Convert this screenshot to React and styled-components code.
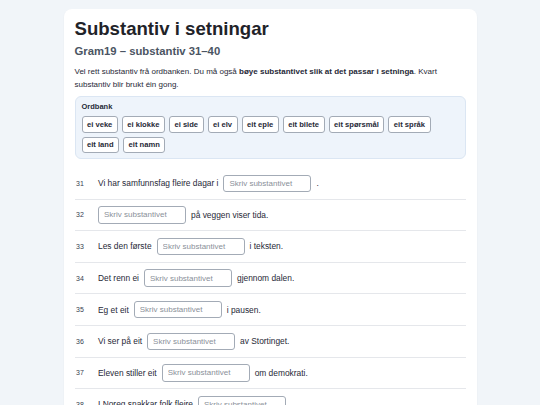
import React from 'react'
import styled, { createGlobalStyle } from 'styled-components'

const GlobalStyle = createGlobalStyle`
  html, body {
    margin: 0;
    padding: 0;
    background: #f1f5f9;
    font-family: "Liberation Sans", Arial, sans-serif;
    color: #1f2937;
  }
`

const words = [
  'ei veke', 'ei klokke', 'ei side', 'ei elv', 'eit eple', 'eit bilete',
  'eit spørsmål', 'eit språk', 'eit land', 'eit namn',
]

// before / after the blank
const sentences = [
  { n: 31, before: 'Vi har samfunnsfag fleire dagar i', after: '.' },
  { n: 32, before: '', after: 'på veggen viser tida.' },
  { n: 33, before: 'Les den første', after: 'i teksten.' },
  { n: 34, before: 'Det renn ei', after: 'gjennom dalen.' },
  { n: 35, before: 'Eg et eit', after: 'i pausen.' },
  { n: 36, before: 'Vi ser på eit', after: 'av Stortinget.' },
  { n: 37, before: 'Eleven stiller eit', after: 'om demokrati.' },
  { n: 38, before: 'I Noreg snakkar folk fleire', after: '.' },
  { n: 39, before: 'Sverige er eit', after: 'i Norden.' },
  { n: 40, before: 'Skriv', after: 'ditt øvst på arket.' },
]

const App = () => {
  return (
    <Page>
      <GlobalStyle />
      <Card>
        <Title>Substantiv i setningar</Title>
        <Subtitle>Gram19 – substantiv 31–40</Subtitle>
        <Intro>
          Vel rett substantiv frå ordbanken. Du må også{' '}
          <b>bøye substantivet slik at det passar i setninga</b>. Kvart
          substantiv blir brukt éin gong.
        </Intro>

        <WordBank>
          <BankLabel>Ordbank</BankLabel>
          <Chips>
            {words.map((w) => (
              <Chip key={w}>{w}</Chip>
            ))}
          </Chips>
        </WordBank>

        <List>
          {sentences.map((s) => (
            <Row key={s.n}>
              <Num>{s.n}</Num>
              {s.before && <span>{s.before}</span>}
              <Blank type="text" placeholder="Skriv substantivet" />
              {s.after && <span>{s.after}</span>}
            </Row>
          ))}
        </List>
      </Card>
    </Page>
  )
}

const Page = styled.div`
  padding: 9px 0 20px;
  display: flex;
  justify-content: center;
`

const Card = styled.div`
  width: 413px;
  box-sizing: border-box;
  background: #ffffff;
  border-radius: 8px;
  padding: 9px 11px 10px;
  box-shadow: 0 1px 2px rgba(15, 23, 42, 0.05);
`

const Title = styled.h1`
  margin: 0;
  font-size: 18.6px;
  line-height: 22px;
  font-weight: 700;
  color: #1f2329;
`

const Subtitle = styled.h2`
  margin: 4px 0 0;
  font-size: 11.3px;
  line-height: 14px;
  font-weight: 700;
  color: #4b5563;
`

const Intro = styled.p`
  margin: 7px 0 0;
  font-size: 8px;
  line-height: 13px;
  color: #1f2937;

  b {
    font-weight: 700;
  }
`

const WordBank = styled.div`
  margin-top: 4.5px;
  background: #eef4fb;
  border: 1px solid #dbe6f3;
  border-radius: 6px;
  padding: 5px 6px 5px;
`

const BankLabel = styled.div`
  font-size: 7.5px;
  line-height: 10px;
  font-weight: 700;
  color: #1f2937;
`

const Chips = styled.div`
  margin-top: 4.5px;
  display: flex;
  flex-wrap: wrap;
  gap: 4px;
`

const Chip = styled.span`
  display: inline-flex;
  align-items: center;
  height: 16.5px;
  box-sizing: border-box;
  padding: 0 4.5px;
  background: #ffffff;
  border: 1px solid #a3abb6;
  border-radius: 3px;
  font-size: 7.6px;
  font-weight: 700;
  color: #1f2937;
`

const List = styled.div`
  margin-top: 9px;
`

const Row = styled.div`
  display: flex;
  align-items: center;
  gap: 5px;
  height: 31.6px;
  box-sizing: border-box;
  border-bottom: 1px solid #e5e7eb;
  font-size: 8.4px;
  color: #1f2937;
`

const Num = styled.span`
  width: 17px;
  flex-shrink: 0;
  font-size: 7px;
  color: #374151;
  padding-left: 1.5px;
`

const Blank = styled.input`
  width: 88px;
  height: 17.3px;
  box-sizing: border-box;
  margin: 0;
  padding: 0 5px;
  border: 1px solid #a3abb6;
  border-radius: 3px;
  background: #fff;
  font-family: "Liberation Sans", Arial, sans-serif;
  font-size: 8px;
  color: #1f2937;
  outline: none;

  &::placeholder {
    color: #8a9099;
  }
`

export default App
